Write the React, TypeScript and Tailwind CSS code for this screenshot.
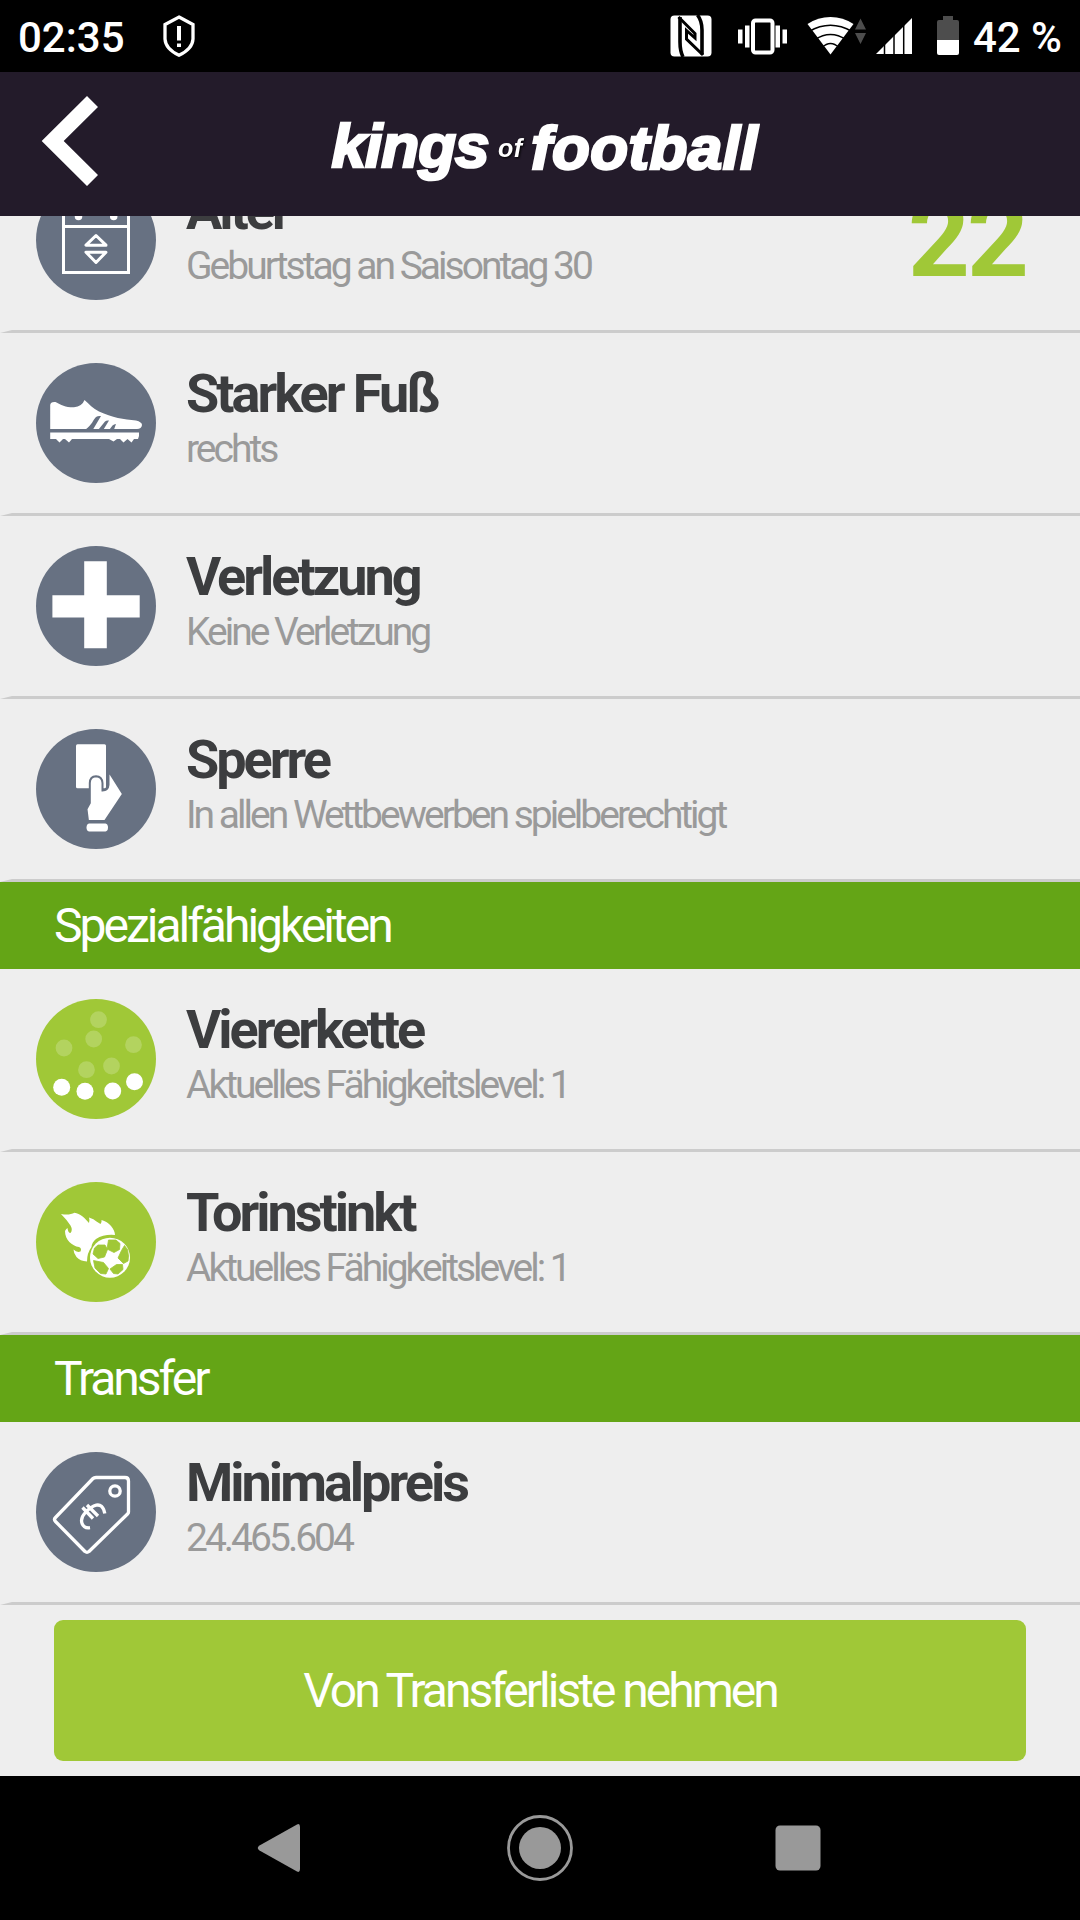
import type { ReactNode } from 'react'

const ICON_BG = {
  slate: 'bg-[#677182]',
  lime: 'bg-[#a0c837]',
}

// ── Row icons, all drawn on a 120x120 disc ────────────────────────────────────

function CalendarIcon() {
  return (
    <svg viewBox="0 0 120 120" className="size-full" fill="none" stroke="#fff" strokeWidth="3">
      <path d="M27.5 26h65v66.500h-65zM27 46.500h66" />
      <path d="M42.500 20v16.500M77.700 20v16.500" strokeWidth="7.500" strokeLinecap="round" />
      <path d="M60 55.500 50 65.200h20zM60 82.500 50 72.200h20z" strokeLinejoin="round" />
    </svg>
  )
}

function ShoeIcon() {
  return (
    <svg viewBox="0 0 120 120" className="size-full">
      <path
        fill="#fff"
        d="M14.200 66V42Q14.500 38.500 19.500 39C25 42 30 44.500 38 44.300Q46 43.500 48.500 37C53 41 57 45.500 63 48.500C76 54.500 88 56.500 100 57.500Q106 59 106 62Q105.500 66 101 66z"
      />
      <path fill="#fff" d="M14.200 69.500H103Q103.500 74 102 76H98L95.500 79.500 91.500 76 87.500 79.500 84 76H81L77.500 78.500 73 76H36L33 79.500 29 76H27L23.500 79.500 20 76H14.200z" />
      <path fill="#677182" d="M49.500 66.500C56 62 57 57 60 54Q62 52.500 65 53L57 66.500zM62.500 66.500 69 58.500Q70.500 57 73 57.500L67.500 66.500zM73.500 66.500 76.500 62.500Q78 61 80 61L78 66.500z" />
    </svg>
  )
}

function CrossIcon() {
  return (
    <svg viewBox="0 0 120 120" className="size-full">
      <path fill="#fff" d="M48.200 15.300H70.800V49.200H103.700V71.600H70.800V102.300H48.200V71.600H16.400V49.200H48.200z" />
    </svg>
  )
}

function CardIcon() {
  return (
    <svg viewBox="0 0 120 120" className="size-full">
      <rect x="40" y="15.300" width="30" height="44" rx="1.500" fill="#fff" />
      <path
        fill="#fff"
        stroke="#677182"
        strokeWidth="2"
        d="M53.800 74V54Q54 47.500 60 47.300Q66 47.500 66.500 54V61.500Q72 61.500 72.500 56V42L87 65 69 92H52L50.500 80z"
      />
      <path fill="#fff" d="M53 94.500H69.500Q72 95 72 98.500T69.500 102.500H53Q50.500 102 50.500 98.500T53 94.500z" />
    </svg>
  )
}

const BACK_FOUR = [[25.7, 88.3], [49, 92.3], [76.7, 92], [98.5, 82.7]]
const OTHER_PLAYERS = [[62.5, 20.7], [57.7, 40], [28, 49], [97.5, 45.7], [50.5, 70.7], [75.5, 67]]

function BackFourIcon() {
  return (
    <svg viewBox="0 0 120 120" className="size-full" fill="#fff">
      {OTHER_PLAYERS.map(([x, y]) => (
        <circle key={x} cx={x} cy={y} r="8.4" opacity="0.2" />
      ))}
      {BACK_FOUR.map(([x, y]) => (
        <circle key={x} cx={x} cy={y} r="8.5" />
      ))}
    </svg>
  )
}

function FireballIcon() {
  return (
    <svg viewBox="0 0 120 120" className="size-full">
      <path
        fill="#fff"
        d="M25 32C31 33 35 32.500 38.500 30.700C44 31.500 49 36 53 41Q54 38.500 53 35.500Q58 37 60.500 39.500L64.500 42Q66 40 65.500 38C73 40 79 47 79 53Q68 52 60 57Q56 60 55.500 65Q51 71 51 79.500Q44 79 40.500 75Q37.500 71 37.500 67.500Q41 71 44.500 69.500Q46 66 43 65C36 64 29 58 29 49Q30 47 31.500 46Q32 51 34.500 51Q37 48 34.500 43.500Q31 38 25 32z"
      />
      <circle cx="74" cy="75.700" r="20" fill="#fff" />
      <g fill="#a0c837" stroke="#a0c837" strokeWidth="0.8" strokeLinejoin="round">
        <path d="M72.500 58 80 58 84 61.500 83.500 67.500 78 70.500 71 67z" />
        <path d="M58.500 66 62 63 69 63 71.500 67.500 68.500 75 62 76.500 57 72z" />
        <path d="M85.500 68.500 88.500 63.500 91.500 67.500 92.500 74 92 79 87.500 81.500 82 76z" />
        <path d="M80.500 82.500 86.500 82.500 87 87.500 82 92 77.500 91.500 74 87z" />
        <path d="M57.500 78.500 60 79 67.500 80.500 72.500 86.500 70 92 64.500 91.500 59 86z" />
      </g>
    </svg>
  )
}

function PriceTagIcon() {
  return (
    <svg viewBox="0 0 120 120" className="size-full" fill="none" stroke="#fff" strokeWidth="3.300" strokeLinejoin="round">
      <path d="M60 25.500H89Q92.500 25.500 92.500 29V60Q92.500 61 91.500 62L53 99.500Q51 101 49 99.500L19.500 69.500Q17.500 67.500 19.500 65.500L57 26.500Q58 25.500 60 25.500z" />
      <circle cx="79" cy="39" r="5.200" />
      <path d="M54 75.700C46 77 42.500 68 49 61S66 47 68.800 61.500M46.500 55.500 57 66.500M51 53 62 64" />
    </svg>
  )
}

// ── List pieces ───────────────────────────────────────────────────────────────

interface InfoRowProps {
  icon: ReactNode
  title: string
  subtitle: string
  tone?: keyof typeof ICON_BG
  value?: string
}

function InfoRow({ icon, title, subtitle, tone = 'slate', value }: InfoRowProps) {
  return (
    <div className="flex h-[183px] shrink-0 border-b-3 border-l-12 border-b-[#ccc] border-l-transparent pt-[30px] pr-[54px] pl-6">
      <div className={`size-[120px] shrink-0 rounded-full ${ICON_BG[tone]}`}>{icon}</div>
      <div className="ml-[30px] grow pt-px whitespace-nowrap">
        <p className="text-[54px] leading-[60px] font-bold text-[#3c3d3f]">{title}</p>
        <p className="text-[39px] leading-[50px] text-[#9a9a9a]">{subtitle}</p>
      </div>
      {value && <span className="text-[108px] leading-[118px] font-bold text-[#a0c837]">{value}</span>}
    </div>
  )
}

function SectionTitle({ children }: { children: ReactNode }) {
  return (
    <h2 className="h-[87px] shrink-0 bg-[#64a516] pl-[54px] text-[48px] leading-[87px] text-white">{children}</h2>
  )
}

// ── System bars ───────────────────────────────────────────────────────────────

function StatusBar() {
  return (
    <div className="flex h-18 shrink-0 items-center bg-black pr-[18px] pl-[18px] text-[42px] font-medium text-white">
      <span className="pt-[3px] leading-[69px]">02:35</span>
      <svg viewBox="0 0 34 44" className="ml-[37px] h-[44px] w-[34px]" fill="none" stroke="#fff" strokeWidth="3.300">
        <path d="M17 3 31 10.500V25Q30.500 35 17 41.200Q3.500 35 3 25V10.500z" />
        <path d="M17 12V26.500M17 29.500V33" strokeWidth="4" />
      </svg>
      <svg viewBox="670 12 290 48" className="ml-auto h-12 w-[290px]" fill="#fff">
        {/* nfc */}
        <rect x="670.500" y="15.500" width="41" height="41" rx="4" />
        <path d="M678.500 17 695 33.500V38L686.500 30.500V39L703 55" fill="none" stroke="#000" strokeWidth="3" />
        <path d="M680 17V42Q680 51 683 57M702 54.500V30Q702 21 697.500 15" fill="none" stroke="#000" strokeWidth="3.600" />
        {/* vibrate */}
        <rect x="753" y="20.500" width="19.500" height="32" rx="2.500" fill="none" stroke="#fff" strokeWidth="4" />
        <path d="M738 29.500h4.500v14H738zM745 25.500h4.500v22H745zM775.500 25.500h4.500v22h-4.500zM782.500 29.500h4.500v14h-4.500z" />
        {/* wifi */}
        <path d="M830.500 54.500 807.500 24Q818 17 830.500 17T853.500 24z" />
        <path d="M809 31.500Q830.500 19 852 31.500M815 39.500Q830.500 29.500 846 39.500M822 47.500Q830.500 39.500 839 47.500" fill="none" stroke="#000" strokeWidth="1.600" />
        <path d="M860.500 18.500 866 29.500H855zM860.500 44 866 33H855z" fill="#4d4d4d" />
        {/* signal */}
        <path d="M876 54 912 18V54z" />
        <path d="M884.500 18V55M894 18V55M903.700 18V55" stroke="#000" strokeWidth="1.500" />
        {/* battery */}
        <path d="M943 16h10v4h4q2 0 2 2v18h-22V22q0-2 2-2h4z" fill="#4d4d4d" />
        <path d="M937 40h22v13q0 2-2 2h-18q-2 0-2-2z" />
      </svg>
      <span className="ml-[13px] pt-[3px] leading-[69px]">42 %</span>
    </div>
  )
}

function NavBar() {
  return (
    <div className="flex h-36 shrink-0 bg-black">
      <svg viewBox="0 0 1080 144" className="h-full w-full" fill="#999">
        <path d="M297 48.500Q300 47 300 51V93Q300 97 297 95.500L259.500 74.500Q256 72 259.500 69.500z" />
        <circle cx="540" cy="72" r="31.500" fill="none" stroke="#999" strokeWidth="2.800" />
        <circle cx="540" cy="72" r="21" />
        <rect x="775.500" y="49.500" width="45" height="45" rx="4.500" />
      </svg>
    </div>
  )
}

function Header() {
  return (
    <header className="flex h-36 shrink-0 items-center bg-[#231b2a]">
      <svg viewBox="0 0 60 90" className="mb-[6px] ml-[41px] h-[90px] w-[60px]" fill="#fff">
        <path d="M.7 45 46 0 57 11 22.700 45 57 79 46 90z" />
      </svg>
      <svg
        viewBox="330 99 440 90"
        className="ml-[229px] h-[90px] w-[440px] font-['Liberation_Sans',sans-serif] tracking-normal italic"
        fill="#fff"
      >
        <g fontSize="62" fontWeight="700" stroke="#fff" strokeWidth="2.600">
          <text x="331.500" y="166.500" textLength="158" lengthAdjust="spacing">kings</text>
          <text x="531" y="168.500" textLength="226.500" lengthAdjust="spacing">football</text>
        </g>
        <text
          x="498"
          y="157"
          fontSize="25"
          fontWeight="700"
          textLength="24"
          className="drop-shadow-[1px_1px_1px_#000]"
        >
          of
        </text>
      </svg>
    </header>
  )
}

export default function App() {
  return (
    <div className="flex h-[1920px] w-[1080px] flex-col overflow-hidden bg-[#eee] font-[Roboto,sans-serif]">
      <StatusBar />
      <Header />
      {/* list is scrolled, so the first row is partly under the header */}
      <main className="flex h-[1560px] shrink-0 flex-col justify-end overflow-hidden tracking-[-3px]">
        <InfoRow icon={<CalendarIcon />} title="Alter" subtitle="Geburtstag an Saisontag 30" value="22" />
        <InfoRow icon={<ShoeIcon />} title="Starker Fuß" subtitle="rechts" />
        <InfoRow icon={<CrossIcon />} title="Verletzung" subtitle="Keine Verletzung" />
        <InfoRow icon={<CardIcon />} title="Sperre" subtitle="In allen Wettbewerben spielberechtigt" />
        <SectionTitle>Spezialfähigkeiten</SectionTitle>
        <InfoRow icon={<BackFourIcon />} tone="lime" title="Viererkette" subtitle="Aktuelles Fähigkeitslevel: 1" />
        <InfoRow icon={<FireballIcon />} tone="lime" title="Torinstinkt" subtitle="Aktuelles Fähigkeitslevel: 1" />
        <SectionTitle>Transfer</SectionTitle>
        <InfoRow icon={<PriceTagIcon />} title="Minimalpreis" subtitle="24.465.604" />
        <button className="mx-[54px] my-[15px] h-[141px] shrink-0 rounded-[9px] bg-[#a0c837] text-[48px] text-white">
          Von Transferliste nehmen
        </button>
      </main>
      <NavBar />
    </div>
  )
}
